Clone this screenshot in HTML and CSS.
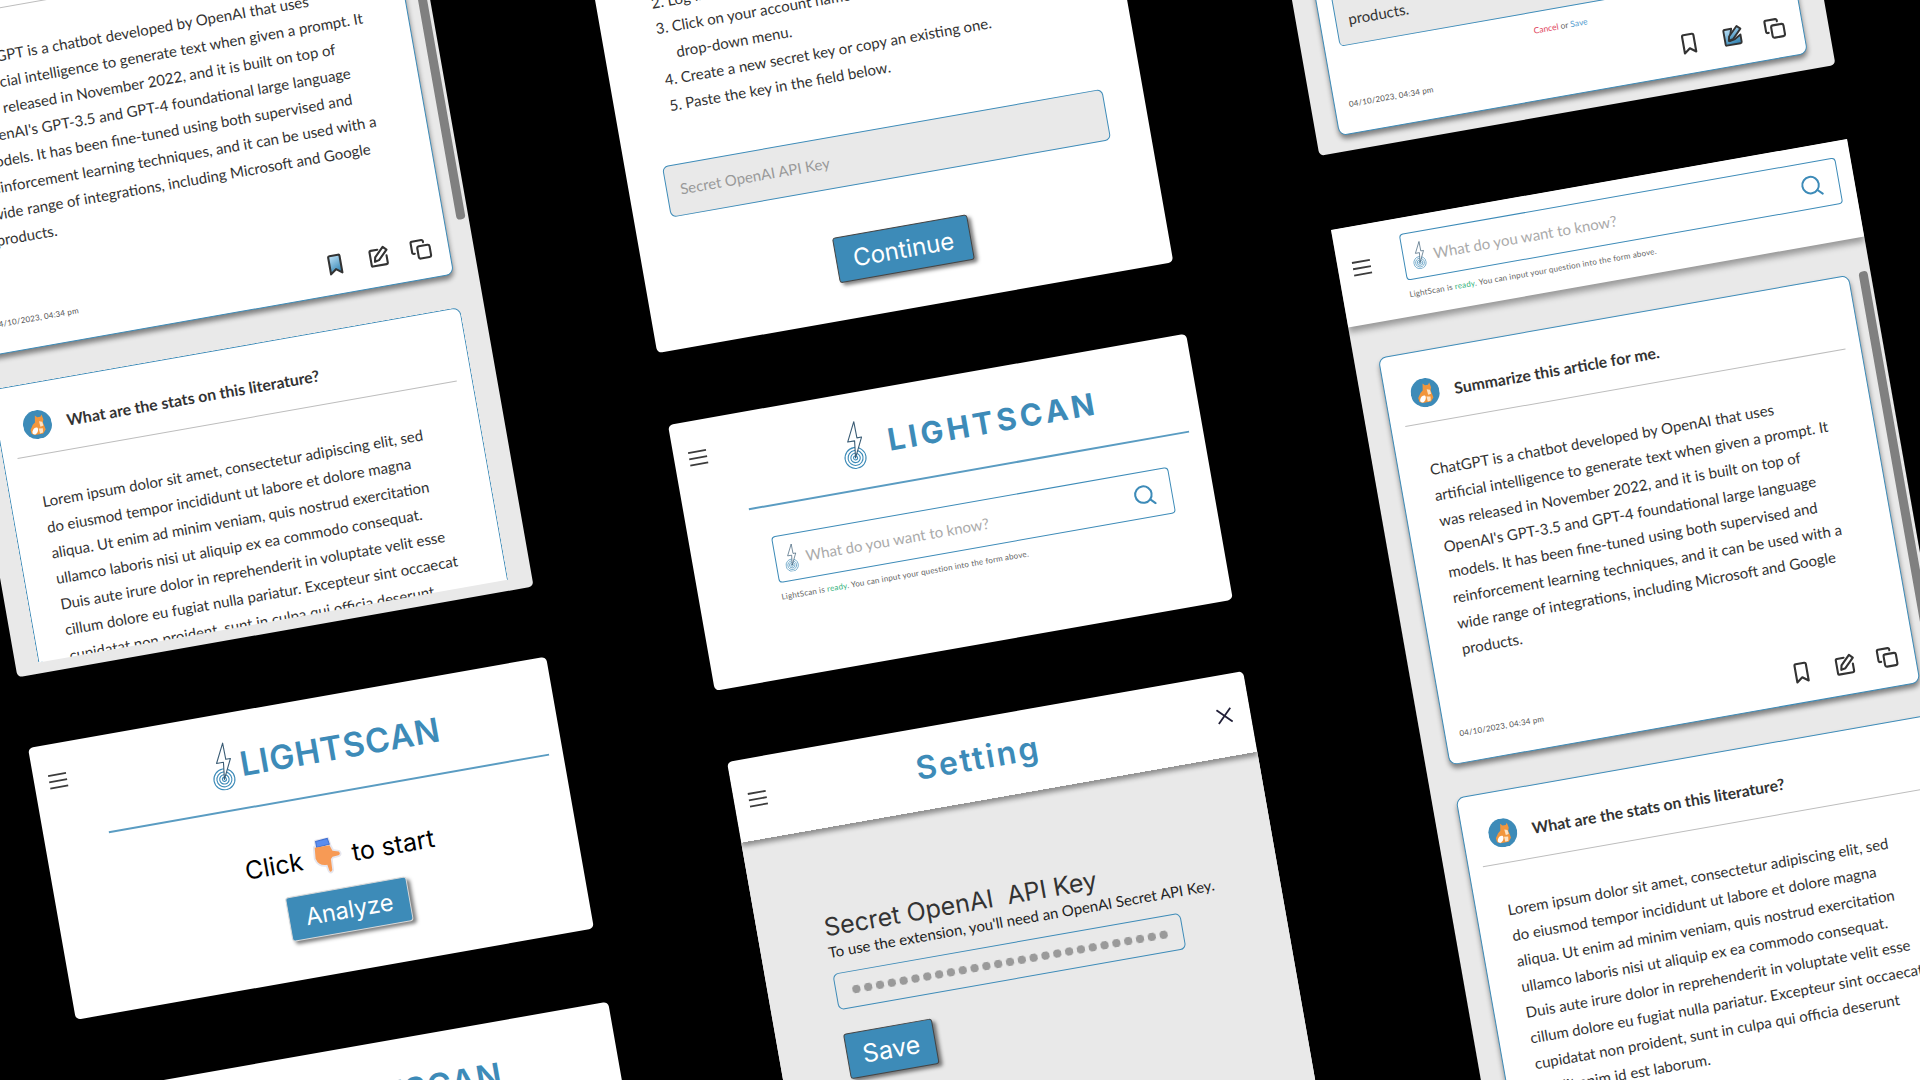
FILE: index.html
```html
<!DOCTYPE html>
<html lang="en">
<head>
    <meta charset="UTF-8">
    <title>LightScan</title>
    <link rel="stylesheet" href="styles.css">
</head>
<body>
<svg class="icon-defs" aria-hidden="true">
    <defs>
        <linearGradient id="activeFill" x1="0" y1="0" x2="0.3" y2="1">
            <stop offset="0" stop-color="#c4e6fb"/>
            <stop offset="1" stop-color="#3d8bb8"/>
        </linearGradient>
        <symbol id="logo" viewBox="0 0 24 48">
            <g fill="none" stroke="#3d8bb8" stroke-width="1.1">
                <circle cx="12" cy="37" r="10.5"/>
                <circle cx="12" cy="37" r="7.5"/>
                <circle cx="12" cy="37" r="4.7"/>
                <circle cx="12" cy="37" r="2"/>
            </g>
            <path d="M16.5 1L7 20L14 20L12 37L21.5 17.5L16.8 17.5Z" fill="#fff" stroke="#3a5c75" stroke-width="1.1" stroke-linejoin="round"/>
        </symbol>
        <symbol id="burger" viewBox="0 0 22 18">
            <path d="M1 2H21M1 9H21M1 16H21" fill="none" stroke="#3c3c3c" stroke-width="2"/>
        </symbol>
        <symbol id="search" viewBox="0 0 24 24">
            <circle cx="11" cy="11" r="9" fill="none" stroke="#3d8bb8" stroke-width="2.2"/>
            <path d="M17.5 17.5L22.5 22.5" fill="none" stroke="#3d8bb8" stroke-width="2.2" stroke-linecap="round"/>
        </symbol>
        <symbol id="bookmark" viewBox="0 0 24 24">
            <path d="M6 4a1.5 1.5 0 0 1 1.5-1.5h9A1.5 1.5 0 0 1 18 4v17.5l-6-4.5-6 4.5z" stroke-width="2.2" stroke-linejoin="round"/>
        </symbol>
        <symbol id="edit" viewBox="0 0 24 24">
            <path d="M12 4.500H5a1.500 1.500 0 0 0-1.500 1.500v14a1 1 0 0 0 1 1h14.500a1.500 1.500 0 0 0 1.500-1.500v-7.500" fill="none" stroke="currentColor" stroke-width="2.2" stroke-linecap="round"/>
            <path d="M18 2.500l3.500 3.500-9.500 9.500-4.500 1 1-4.500z" fill="none" stroke="currentColor" stroke-width="2.2" stroke-linejoin="round"/>
        </symbol>
        <symbol id="edit-on" viewBox="0 0 24 24">
            <path d="M12 4.500H5a1.500 1.500 0 0 0-1.500 1.500v14a1 1 0 0 0 1 1h14.500a1.500 1.500 0 0 0 1.500-1.500v-7.500l-7 4-5 1 1-5z" fill="url(#activeFill)" stroke="#333" stroke-width="2" stroke-linejoin="round"/>
            <path d="M18 2.500l3.500 3.500-9.500 9.500-4.500 1 1-4.500z" fill="url(#activeFill)" stroke="#333" stroke-width="2" stroke-linejoin="round"/>
        </symbol>
        <symbol id="copy" viewBox="0 0 24 24">
            <rect x="8.500" y="8.500" width="13" height="13" rx="2" fill="none" stroke="currentColor" stroke-width="2.2"/>
            <path d="M5 15.500H4a1.500 1.500 0 0 1-1.500-1.500V4A1.500 1.500 0 0 1 4 2.500h10A1.500 1.500 0 0 1 15.500 4v1" fill="none" stroke="currentColor" stroke-width="2.2" stroke-linecap="round"/>
        </symbol>
        <symbol id="cat" viewBox="0 0 28 28">
            <circle cx="14" cy="14" r="14" fill="#3d8bb8"/>
            <path d="M13 5l2 2h3l1.500-2 1 5-1 3 1 4 .5 3-3 3.500h-8l-3-1.500-.5-4 3-4.500 2.500-2z" fill="#f2963c"/>
            <path d="M8 20c1-3 4-4 5.500-3 1 2-.5 5-3 6-2 0-3-1-2.500-3z" fill="#fff"/>
            <path d="M16 11l3 1 .5 4-3 .5z" fill="#fde3c4"/>
            <path d="M14.500 18l4 .5-.5 4-3 .5z" fill="#fde3c4"/>
        </symbol>
        <symbol id="hand" viewBox="0 0 30 38">
            <g fill="none" stroke="#e6e6ee" stroke-width="3.500" stroke-linejoin="round">
                <path d="M6 2L18 1L19 7L6 8Z"/>
                <path d="M4 8H19L21 14L27 16Q29 19 26 19.500L20 20L18 22L17.500 33Q15.500 36 14.500 33L13.500 27Q5 27 3 19Z"/>
            </g>
            <path d="M6 2L18 1L19 7L6 8Z" fill="#5b8def" stroke="#3f6fd0"/>
            <path d="M4 8H19L21 14L27 16Q29 19 26 19.500L20 20L18 22L17.500 33Q15.500 36 14.500 33L13.500 27Q5 27 3 19Z" fill="#f79a55"/>
        </symbol>
    </defs>
</svg>

<main class="board">

    <!-- chat panel, top left -->
    <section class="card panel panel-a">
        <div class="chat-list">
            <article class="bubble">
                <div class="bubble-head">
                    <svg class="avatar"><use href="#cat"/></svg>
                    <h3>Summarize this article for me.</h3>
                </div>
                <p class="bubble-text">ChatGPT is a chatbot developed by OpenAI that uses<br>artificial intelligence to generate text when given a prompt. It<br>was released in November 2022, and it is built on top of<br>OpenAI's GPT-3.5 and GPT-4 foundational large language<br>models. It has been fine-tuned using both supervised and<br>reinforcement learning techniques, and it can be used with a<br>wide range of integrations, including Microsoft and Google<br>products.</p>
                <div class="bubble-foot">
                    <span class="date">04/10/2023, 04:34 pm</span>
                    <div class="actions">
                        <svg class="action bookmark-on"><use href="#bookmark"/></svg>
                        <svg class="action"><use href="#edit"/></svg>
                        <svg class="action"><use href="#copy"/></svg>
                    </div>
                </div>
            </article>
            <article class="bubble bubble-cut">
                <div class="bubble-head">
                    <svg class="avatar"><use href="#cat"/></svg>
                    <h3>What are the stats on this literature?</h3>
                </div>
                <p class="bubble-text">Lorem ipsum dolor sit amet, consectetur adipiscing elit, sed<br>do eiusmod tempor incididunt ut labore et dolore magna<br>aliqua. Ut enim ad minim veniam, quis nostrud exercitation<br>ullamco laboris nisi ut aliquip ex ea commodo consequat.<br>Duis aute irure dolor in reprehenderit in voluptate velit esse<br>cillum dolore eu fugiat nulla pariatur. Excepteur sint occaecat<br>cupidatat non proident, sunt in culpa qui officia deserunt<br>mollit anim id est laborum.</p>
            </article>
        </div>
        <div class="scrollbar scrollbar-a"></div>
    </section>

    <!-- api key steps, top centre -->
    <section class="card key-card">
        <ol class="steps">
            <li>Go to the OpenAI website.</li>
            <li>Log in to your account.</li>
            <li>Click on your account name and select API keys from the<br>drop-down menu.</li>
            <li>Create a new secret key or copy an existing one.</li>
            <li>Paste the key in the field below.</li>
        </ol>
        <div class="key-input">Secret OpenAI API Key</div>
        <button class="btn btn-dark btn-continue">Continue</button>
    </section>

    <!-- edit mode, top right -->
    <section class="card panel panel-b">
        <div class="chat-list">
            <article class="bubble bubble-edit">
                <div class="edit-box">products.</div>
                <div class="edit-links"><span class="cancel">Cancel</span> or <span class="save">Save</span></div>
                <div class="bubble-foot">
                    <span class="date">04/10/2023, 04:34 pm</span>
                    <div class="actions">
                        <svg class="action"><use href="#bookmark"/></svg>
                        <svg class="action"><use href="#edit-on"/></svg>
                        <svg class="action"><use href="#copy"/></svg>
                    </div>
                </div>
            </article>
        </div>
    </section>

    <!-- search start screen, centre -->
    <section class="card search-card">
        <svg class="burger"><use href="#burger"/></svg>
        <div class="brand brand-wide">
            <svg class="brand-logo"><use href="#logo"/></svg>
            <span>LIGHTSCAN</span>
        </div>
        <div class="brand-line"></div>
        <div class="search-wrap">
            <div class="search-box">
                <svg class="mini-logo"><use href="#logo"/></svg>
                <span class="placeholder">What do you want to know?</span>
                <svg class="search-icon"><use href="#search"/></svg>
            </div>
            <p class="status">LightScan is <span class="ready">ready</span>. You can input your question into the form above.</p>
        </div>
    </section>

    <!-- full chat, right -->
    <section class="card panel panel-c">
        <header class="panel-header">
            <svg class="burger burger-flow"><use href="#burger"/></svg>
            <div class="search-wrap search-wrap-wide">
                <div class="search-box">
                    <svg class="mini-logo"><use href="#logo"/></svg>
                    <span class="placeholder">What do you want to know?</span>
                    <svg class="search-icon"><use href="#search"/></svg>
                </div>
                <p class="status">LightScan is <span class="ready">ready</span>. You can input your question into the form above.</p>
            </div>
        </header>
        <div class="chat-list chat-list-top">
            <article class="bubble">
                <div class="bubble-head">
                    <svg class="avatar"><use href="#cat"/></svg>
                    <h3>Summarize this article for me.</h3>
                </div>
                <p class="bubble-text">ChatGPT is a chatbot developed by OpenAI that uses<br>artificial intelligence to generate text when given a prompt. It<br>was released in November 2022, and it is built on top of<br>OpenAI's GPT-3.5 and GPT-4 foundational large language<br>models. It has been fine-tuned using both supervised and<br>reinforcement learning techniques, and it can be used with a<br>wide range of integrations, including Microsoft and Google<br>products.</p>
                <div class="bubble-foot">
                    <span class="date">04/10/2023, 04:34 pm</span>
                    <div class="actions">
                        <svg class="action"><use href="#bookmark"/></svg>
                        <svg class="action"><use href="#edit"/></svg>
                        <svg class="action"><use href="#copy"/></svg>
                    </div>
                </div>
            </article>
            <article class="bubble">
                <div class="bubble-head">
                    <svg class="avatar"><use href="#cat"/></svg>
                    <h3>What are the stats on this literature?</h3>
                </div>
                <p class="bubble-text">Lorem ipsum dolor sit amet, consectetur adipiscing elit, sed<br>do eiusmod tempor incididunt ut labore et dolore magna<br>aliqua. Ut enim ad minim veniam, quis nostrud exercitation<br>ullamco laboris nisi ut aliquip ex ea commodo consequat.<br>Duis aute irure dolor in reprehenderit in voluptate velit esse<br>cillum dolore eu fugiat nulla pariatur. Excepteur sint occaecat<br>cupidatat non proident, sunt in culpa qui officia deserunt<br>mollit anim id est laborum.</p>
            </article>
        </div>
        <div class="scrollbar scrollbar-c"></div>
    </section>

    <!-- analyze screen, bottom left -->
    <section class="card analyze-card analyze-one">
        <svg class="burger"><use href="#burger"/></svg>
        <div class="brand">
            <svg class="brand-logo"><use href="#logo"/></svg>
            <span>LIGHTSCAN</span>
        </div>
        <div class="brand-line"></div>
        <div class="start-col">
            <p class="start-text">Click <svg class="hand"><use href="#hand"/></svg> to start</p>
            <button class="btn">Analyze</button>
        </div>
    </section>

    <!-- same screen again, cut by the bottom edge -->
    <section class="card analyze-card analyze-two">
        <svg class="burger"><use href="#burger"/></svg>
        <div class="brand">
            <svg class="brand-logo"><use href="#logo"/></svg>
            <span>LIGHTSCAN</span>
        </div>
        <div class="brand-line"></div>
    </section>

    <!-- settings, bottom centre -->
    <section class="card setting-card">
        <header class="setting-header">
            <svg class="burger burger-flow"><use href="#burger"/></svg>
            <h2>Setting</h2>
            <svg class="close" viewBox="0 0 16 16"><path d="M1 1L15 15M15 1L1 15" fill="none" stroke="#222038" stroke-width="1.800"/></svg>
        </header>
        <div class="setting-body">
            <h4>Secret OpenAI&nbsp; API Key</h4>
            <p>To use the extension, you'll need an OpenAI Secret API Key.</p>
            <div class="password-box"><div class="dots"></div></div>
            <button class="btn btn-dark btn-save">Save</button>
        </div>
    </section>

</main>
</body>
</html>
```

FILE: styles.css
```css
* {
    box-sizing: border-box;
}

body {
    margin: 0;
    background-color: #000;
    color: #333;
    font-family: "Lato", "Noto Sans", sans-serif;
}

.icon-defs {
    position: absolute;
    width: 0;
    height: 0;
}

/* Free canvas, every screen is a tilted window on it */
.board {
    position: relative;
    width: 1920px;
    height: 1080px;
    overflow: hidden;
    background-color: #000;
}

.card {
    position: absolute;
    width: 524px;
    background-color: #fff;
    border-radius: 5px;
    transform: rotate(-10deg);
    transform-origin: 0 0;
}

.panel-a { left: -104px; top: -12px; height: 700px; }
.panel-b { left: 1250px; top: -238px; height: 400px; }
.panel-c { left: 1331px; top: 230px; height: 1020px; border-radius: 0; }
.key-card { left: 567px; top: -159px; height: 520px; }
.search-card { left: 668px; top: 425px; width: 526px; height: 270px; }
.analyze-one { left: 28px; top: 748px; width: 526px; height: 276px; }
.analyze-two { left: 90px; top: 1093px; width: 526px; height: 276px; }
.setting-card { left: 727px; top: 762px; height: 520px; }

/* Chat panels */
.panel {
    display: flex;
    flex-direction: column;
    background-color: #e9e9e9;
    overflow: hidden;
}

.panel-a {
    padding: 0 24px 11px 23px;
}

.panel-b {
    padding: 0 25px 16px 23px;
}

.panel-header {
    position: relative;
    flex: none;
    display: flex;
    align-items: flex-start;
    gap: 32px;
    height: 99px;
    padding: 16px 15px 0 14px;
    background-color: #fff;
    box-shadow: 0 5px 6px rgba(0, 0, 0, 0.35);
}

.panel-header .burger {
    margin-top: 18px;
}

.chat-list {
    flex: 1;
    min-height: 0;
    display: flex;
    flex-direction: column;
    justify-content: flex-end;
    gap: 33px;
}

.chat-list-top {
    justify-content: flex-start;
    padding: 35px 22px 0 24px;
}

.bubble {
    flex: none;
    display: flex;
    flex-direction: column;
    height: 414px;
    padding: 0 16px 18px 14px;
    background-color: #fff;
    border: 1px solid #3d8bb8;
    border-radius: 8px;
    box-shadow: 0 4px 5px rgba(0, 0, 0, 0.45);
}

.bubble-cut {
    height: 277px;
    overflow: hidden;
    border-bottom: none;
    border-radius: 8px 8px 0 0;
    box-shadow: none;
}

.bubble-head {
    flex: none;
    display: flex;
    align-items: center;
    gap: 15px;
    height: 72px;
    padding: 12px 0 0 11px;
    margin-right: -1px;
    border-bottom: 1px solid #bdbdbd;
}

.bubble-head h3 {
    margin: 0;
    font-size: 15.8px;
    font-weight: 700;
    color: #333;
}

.avatar {
    flex: none;
    width: 29px;
    height: 29px;
}

.bubble-text {
    flex: none;
    margin: 33px 0 0 17px;
    font-size: 15px;
    line-height: 26px;
    white-space: nowrap;
    color: #333;
}

.bubble-foot {
    display: flex;
    align-items: center;
    justify-content: space-between;
    margin-top: auto;
}

.date {
    font-size: 8px;
    color: #555;
    letter-spacing: 0.2px;
}

.actions {
    display: flex;
    gap: 20.5px;
}

.action {
    width: 23px;
    height: 23px;
    color: #333;
    fill: #fff;
    stroke: #333;
}

.bookmark-on {
    fill: url(#activeFill);
}

.scrollbar {
    position: absolute;
    right: 3px;
    width: 9px;
    background-color: #808080;
    border-radius: 4px;
}

.scrollbar-a {
    top: 0;
    height: 326px;
}

.scrollbar-c {
    top: 133px;
    height: 420px;
}

/* Edit mode */
.bubble-edit {
    height: 100%;
    justify-content: flex-end;
}

.edit-box {
    flex: 1;
    display: flex;
    align-items: flex-end;
    margin-right: -2px;
    margin-left: 1px;
    padding: 0 12px 12px;
    font-size: 15px;
    line-height: 26px;
    background-color: #e9e9e9;
    border: 1px solid #3d8bb8;
    border-radius: 0 0 5px 5px;
}

.edit-links {
    margin-top: 12px;
    margin-bottom: 22px;
    font-size: 8.5px;
    line-height: 12px;
    text-align: center;
    color: #666;
}

.cancel {
    color: #e0455e;
}

.save {
    color: #5aa0d0;
}

/* Search and start screens */
.burger {
    position: absolute;
    left: 14px;
    top: 29px;
    width: 20px;
    height: 17px;
}

.burger-flow {
    position: static;
    flex: none;
}

.brand {
    position: absolute;
    left: 176px;
    top: 28px;
    display: flex;
    align-items: flex-end;
    gap: 6px;
    font-family: "Inter", sans-serif;
    font-size: 33.5px;
    line-height: 46px;
    font-weight: 600;
    letter-spacing: 0.8px;
    color: #3d8bb8;
}

.brand-wide {
    left: 167px;
    gap: 23px;
    font-size: 30.5px;
    font-weight: 700;
    letter-spacing: 3.7px;
}

.brand-logo {
    flex: none;
    width: 24px;
    height: 48px;
}

.brand-line {
    position: absolute;
    left: 65px;
    top: 96px;
    width: 447px;
    height: 2px;
    background-color: #5a9cc2;
}

.search-wrap {
    position: absolute;
    left: 82px;
    top: 128px;
    width: 403px;
}

.search-wrap-wide {
    position: static;
    width: 443px;
}

.search-box {
    display: flex;
    align-items: center;
    height: 47px;
    padding: 0 16px 0 8px;
    background-color: #fff;
    border: 1px solid #3d8bb8;
    border-radius: 4px;
}

.mini-logo {
    flex: none;
    width: 14px;
    height: 28px;
}

.placeholder {
    flex: 1;
    margin-left: 8px;
    font-size: 15px;
    color: #aaa;
}

.search-icon {
    flex: none;
    width: 22px;
    height: 22px;
}

.status {
    margin: 9px 0 0 0;
    font-size: 8px;
    letter-spacing: 0.2px;
    color: #666;
}

.ready {
    color: #36b37e;
}

.start-col {
    position: absolute;
    left: 65px;
    top: 136px;
    width: 447px;
    display: flex;
    flex-direction: column;
    align-items: center;
    gap: 10px;
}

.start-text {
    display: flex;
    align-items: center;
    gap: 10px;
    margin: 0;
    height: 46px;
    font-family: "Inter", sans-serif;
    font-size: 25px;
    font-weight: 400;
    color: #000;
}

.hand {
    width: 30px;
    height: 38px;
}

.btn {
    display: block;
    width: 123px;
    height: 45px;
    padding: 0;
    font-family: "Inter", sans-serif;
    font-size: 23.5px;
    color: #fff;
    background-color: #3d8bb8;
    border: 1px solid #d8d8d8;
    border-radius: 3px;
    box-shadow: 3px 3px 4px rgba(0, 0, 0, 0.5);
}

.btn-dark {
    border-color: #444;
}

/* Key steps */
.key-card {
    display: flex;
    flex-direction: column;
    justify-content: flex-end;
    padding: 0 40px 37px 37px;
}

.steps {
    margin: 0 0 46px 16px;
    padding: 0 0 0 18px;
    font-size: 15px;
    line-height: 26px;
    color: #333;
}

.key-input {
    display: flex;
    align-items: flex-end;
    height: 52px;
    padding: 0 13px 17px;
    font-size: 15px;
    color: #999;
    background-color: #e9e9e9;
    border: 1px solid #3d8bb8;
    border-radius: 6px;
}

.btn-continue {
    width: 137px;
    height: 46px;
    margin: 48px auto 0;
    font-size: 24px;
}

/* Settings */
.setting-header {
    position: relative;
    display: flex;
    align-items: center;
    justify-content: space-between;
    height: 82px;
    padding: 0 18px 0 14px;
    box-shadow: 0 4px 5px rgba(0, 0, 0, 0.4);
}

.setting-header h2 {
    margin: -4px 0 0 -28px;
    font-family: "Inter", sans-serif;
    font-size: 32px;
    font-weight: 600;
    letter-spacing: 2.4px;
    color: #3d8bb8;
}

.close {
    width: 16px;
    height: 16px;
}

.setting-body {
    height: 438px;
    padding: 83px 0 0 67px;
    background-color: #e9e9e9;
}

.setting-body h4 {
    margin: 0;
    font-family: "Inter", sans-serif;
    font-size: 25px;
    line-height: 30px;
    font-weight: 400;
    color: #333;
}

.setting-body p {
    margin: 0;
    font-size: 15px;
    line-height: 20px;
    color: #222;
}

.password-box {
    width: 353px;
    height: 37px;
    padding: 12px 14px;
    margin-top: 12px;
    border: 1px solid #3d8bb8;
    border-radius: 6px;
}

.dots {
    width: 324px;
    height: 12px;
    background: radial-gradient(circle, #9a9a9a 4px, transparent 4.5px) 0 0 / 12px 12px repeat-x;
}

.btn-save {
    width: 90px;
    height: 46px;
    margin-top: 24px;
    font-size: 25px;
}
```
